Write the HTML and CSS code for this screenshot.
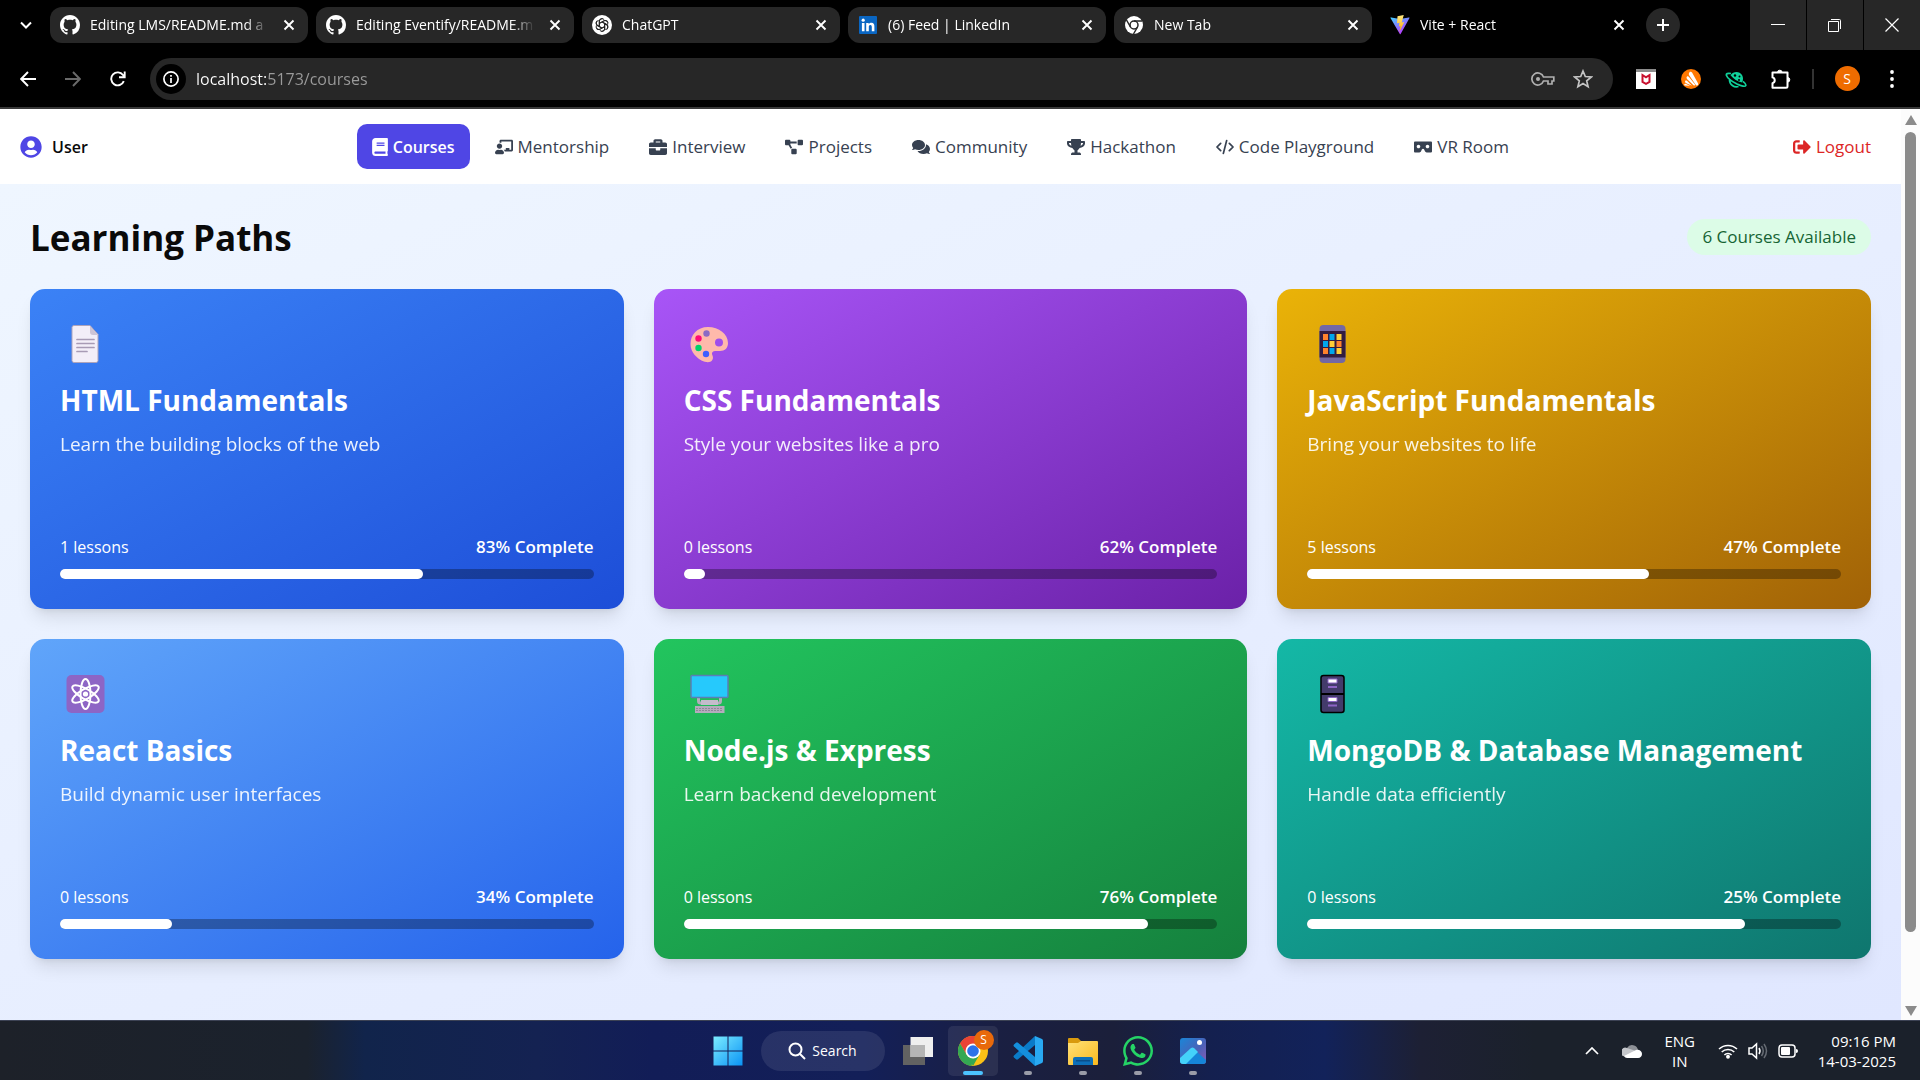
FILE: index.html
```html
<!DOCTYPE html>
<html lang="en">
<head>
<meta charset="utf-8">
<meta name="viewport" content="width=device-width, initial-scale=1">
<title>Vite + React</title>
<link rel="stylesheet" href="styles.css">
</head>
<body>
<svg class="defs" aria-hidden="true">
  <defs>
    <symbol id="x" viewBox="0 0 12 12"><path d="M1.500 1.500l9 9M10.500 1.500l-9 9" stroke="currentColor" stroke-width="1.900" fill="none"/></symbol>
    <symbol id="github" viewBox="0 0 16 16"><path fill="#fff" d="M8 0C3.580 0 0 3.580 0 8c0 3.540 2.290 6.530 5.470 7.590.4.070.55-.17.55-.38 0-.19-.01-.82-.01-1.490-2.010.37-2.530-.49-2.690-.94-.09-.23-.48-.94-.82-1.130-.28-.15-.68-.52-.01-.53.63-.01 1.080.58 1.230.82.72 1.210 1.870.87 2.330.66.07-.52.28-.87.51-1.070-1.780-.2-3.640-.89-3.640-3.950 0-.87.31-1.590.82-2.150-.08-.2-.36-1.020.08-2.120 0 0 .67-.21 2.200.82.64-.18 1.320-.27 2-.27s1.360.09 2 .27c1.530-1.040 2.200-.82 2.200-.82.44 1.100.16 1.920.08 2.120.51.56.82 1.270.82 2.150 0 3.070-1.870 3.750-3.650 3.950.29.25.54.73.54 1.480 0 1.070-.01 1.930-.01 2.200 0 .21.15.46.55.38A8.010 8.010 0 0 0 16 8c0-4.420-3.580-8-8-8z"/></symbol>
    <linearGradient id="vg" x1="0" y1="0" x2="0.600" y2="1"><stop offset="0" stop-color="#41d1ff"/><stop offset="1" stop-color="#bd34fe"/></linearGradient>
    <linearGradient id="vy" x1="0" y1="0" x2="0" y2="1"><stop offset="0" stop-color="#ffea83"/><stop offset="1" stop-color="#ffa800"/></linearGradient>
    <linearGradient id="win" x1="0" y1="0" x2="1" y2="1" gradientUnits="objectBoundingBox"><stop offset="0" stop-color="#7cecff"/><stop offset="1" stop-color="#0a93f5"/></linearGradient>
    <linearGradient id="fold" x1="0" y1="0" x2="1" y2="1"><stop offset="0" stop-color="#ffe178"/><stop offset="1" stop-color="#fbb91e"/></linearGradient>
    <linearGradient id="pho" x1="0" y1="0" x2="1" y2="1"><stop offset="0" stop-color="#1a86d8"/><stop offset="0.550" stop-color="#4a62b8"/><stop offset="1" stop-color="#8a5bb5"/></linearGradient>
  </defs>
</svg>

<header class="browser">
  <div class="tabstrip">
    <button class="tab-search" aria-label="Search tabs"><svg width="12" height="8" viewBox="0 0 12 8"><path d="M1 1.500l5 5 5-5" stroke="#fff" stroke-width="2" fill="none"/></svg></button>
    <div class="tabs">
      <div class="tab"><svg class="favicon" viewBox="0 0 16 16"><use href="#github"/></svg><button class="tab-title">Editing LMS/README.md a</button><button class="tab-close" aria-label="Close tab"><svg width="12" height="12"><use href="#x"/></svg></button></div>
      <div class="tab"><svg class="favicon" viewBox="0 0 16 16"><use href="#github"/></svg><button class="tab-title">Editing Eventify/README.m</button><button class="tab-close" aria-label="Close tab"><svg width="12" height="12"><use href="#x"/></svg></button></div>
      <div class="tab"><svg class="favicon" viewBox="0 0 20 20"><circle cx="10" cy="10" r="10" fill="#fff"/><g fill="none" stroke="#222" stroke-width="1"><path id="kn" d="M7.300 11.500V6.300a2.700 2.700 0 0 1 5-1.400M7.300 8.500l4.500-2.600a2.700 2.700 0 0 1 3.900 1.500"/><use href="#kn" transform="rotate(60 10 10)"/><use href="#kn" transform="rotate(120 10 10)"/><use href="#kn" transform="rotate(180 10 10)"/><use href="#kn" transform="rotate(240 10 10)"/><use href="#kn" transform="rotate(300 10 10)"/></g></svg><button class="tab-title">ChatGPT</button><button class="tab-close" aria-label="Close tab"><svg width="12" height="12"><use href="#x"/></svg></button></div>
      <div class="tab"><svg class="favicon" viewBox="0 0 20 20"><rect x="1" y="1" width="18" height="18" rx="1" fill="#0a66c2"/><circle cx="5.200" cy="5.200" r="1.600" fill="#fff"/><path fill="#fff" d="M3.900 8h2.600v8.300H3.900zM8.200 8h2.500v1.200c.5-.8 1.400-1.400 2.700-1.400 2.500 0 3 1.700 3 3.900v4.600h-2.600v-4.100c0-1.100-.1-2.200-1.500-2.200s-1.500 1.100-1.500 2.200v4.100H8.200z"/></svg><button class="tab-title">(6) Feed | LinkedIn</button><button class="tab-close" aria-label="Close tab"><svg width="12" height="12"><use href="#x"/></svg></button></div>
      <div class="tab"><svg class="favicon" viewBox="0 0 20 20"><circle cx="10" cy="10" r="9" fill="#fff"/><circle cx="10" cy="10" r="4" fill="#fff" stroke="#272727" stroke-width="1.500"/><path d="M10 6h8M6.500 12L2.500 5M13.500 12l-4 7" stroke="#272727" stroke-width="1.500"/></svg><button class="tab-title">New Tab</button><button class="tab-close" aria-label="Close tab"><svg width="12" height="12"><use href="#x"/></svg></button></div>
      <div class="tab tab-active"><svg class="favicon" viewBox="0 0 32 32"><path fill="url(#vg)" d="M31 5L17 30.500c-.3.500-1 .5-1.300 0L1 5c-.4-.6.200-1.300.9-1.200L16 6.500l14.200-2.700c.7-.1 1.100.6.8 1.200z"/><path fill="url(#vy)" d="M22 0L12 2l-.8 11.300 4-.9-1.200 6 2.800-.8-1.900 9.400 8-16-4.100.8z"/></svg><button class="tab-title">Vite + React</button><button class="tab-close" aria-label="Close tab"><svg width="12" height="12"><use href="#x"/></svg></button></div>
    </div>
    <button class="new-tab" aria-label="New tab"><svg width="14" height="14" viewBox="0 0 14 14"><path d="M7 1v12M1 7h12" stroke="#fff" stroke-width="2"/></svg></button>
    <div class="window-controls">
      <button aria-label="Minimize"><svg width="14" height="14" viewBox="0 0 14 14"><path d="M0 6.500h14" stroke="#fff"/></svg></button>
      <button aria-label="Restore"><svg width="14" height="14" viewBox="0 0 14 14"><path d="M.5 3.500h10v10H.5zM3 1.500h8.500q1 0 1 1V11" stroke="#fff" fill="none"/></svg></button>
      <button aria-label="Close"><svg width="14" height="14" viewBox="0 0 14 14"><path d="M.5.500l13 13M13.500.500l-13 13" stroke="#fff" stroke-width="1.200"/></svg></button>
    </div>
  </div>
  <div class="toolbar">
    <button class="tool" aria-label="Back"><svg width="16" height="16" viewBox="0 0 16 16"><path d="M16 8H1.500M8 1L1.200 8 8 15" stroke="#fff" stroke-width="1.900" fill="none"/></svg></button>
    <button class="tool" aria-label="Forward"><svg width="16" height="16" viewBox="0 0 16 16"><path d="M0 8h14.500M8 1l6.800 7L8 15" stroke="#6a6a6a" stroke-width="1.900" fill="none"/></svg></button>
    <button class="tool" aria-label="Reload"><svg width="16" height="16" viewBox="0 0 16 16"><path d="M13.800 10.200A6.500 6.500 0 1 1 13 4l1.300 1.700M14.700.500v5.700H9" stroke="#fff" stroke-width="1.900" fill="none"/></svg></button>
    <div class="address">
      <button class="site-info" aria-label="Site information"><svg width="16" height="16" viewBox="0 0 16 16"><circle cx="8" cy="8" r="7.100" stroke="#fff" stroke-width="1.700" fill="none"/><path d="M8 7v5M8 4v1.700" stroke="#fff" stroke-width="1.700"/></svg></button>
      <input class="url" type="text" aria-label="Address" value="localhost:5173/courses">
      <button class="tool" aria-label="Passwords"><svg width="24" height="14" viewBox="0 0 24 14"><path d="M12.500 5h10.300v4H21v3h-4V9h-4.500A6 6 0 1 1 12.500 5z" stroke="#b0b0b0" stroke-width="1.700" fill="none"/><circle cx="7" cy="7" r="2" fill="#b0b0b0"/></svg></button>
      <button class="tool" aria-label="Bookmark"><svg width="20" height="20" viewBox="0 0 20 20"><path d="M10 2l2.300 5.500 6 .5-4.600 3.900 1.400 5.800L10 14.600l-5.100 3.100 1.400-5.800L1.700 8l6-.5z" stroke="#c4c4c4" stroke-width="1.700" fill="none"/></svg></button>
    </div>
    <div class="extensions">
      <button class="tool" aria-label="McAfee"><svg width="20" height="20" viewBox="0 0 20 20"><path fill="#fff" d="M0 0h20v20H0z"/><path fill="#8c8c8c" d="M0 0h20v3H0z"/><path d="M6.500 6v7l3.500 1.800 3.500-1.800V6L10 8.300z" fill="none" stroke="#c8102e" stroke-width="2"/></svg></button>
      <button class="tool" aria-label="Avast"><svg width="20" height="20" viewBox="0 0 20 20"><circle cx="10" cy="10" r="10" fill="#ff7800"/><path fill="#fff" d="M8.500 3.200c-1 1.200-.8 2.400 0 3.600l6.500 9.500c1.700.7 2.800-.3 2-2L11.200 3.800c-.6-1-1.900-1.400-2.700-.6zM6 7.600c-.8 1-.5 1.700.2 2.700l6.300 6c1 .5 1.800 0 1.500-.8L8 8c-.6-.8-1.400-1-2-.4zM4.300 11.800c-.5.900-.2 1.600.5 2.100l6.200 2.900-5-5c-.6-.5-1.300-.6-1.700 0zM3.300 15.300c-.2.700.2 1.200.8 1.300l5 .2-4.600-2c-.6-.2-1-.1-1.200.5z"/></svg></button>
      <button class="tool" aria-label="Planet"><svg width="22" height="20" viewBox="0 0 22 20"><path d="M5.500 6.200C8.500 1.800 14.500 2 17 6c1.300 2 1.400 5 .2 7.500C12.500 12.500 8.500 10 5.500 6.200z" fill="#10d09a"/><path d="M6 4.500C2.500 4 .8 4.600 1.500 6.500c1 2.700 6 6.300 10.500 8.600 4.700 2.200 8.300 2.800 8.800 1.300.4-1-.8-2.400-2.800-4.100M4.500 11a7 7 0 0 0 9 6.500" fill="none" stroke="#10d09a" stroke-width="1.700"/><circle cx="10" cy="6.500" r="1.200" fill="#000"/><circle cx="14.500" cy="7.500" r="1" fill="#000"/><circle cx="14" cy="11" r="1" fill="#000"/></svg></button>
      <button class="tool" aria-label="Extensions"><svg width="22" height="22" viewBox="0 0 22 22"><path d="M2.500 4.500h15v13.800a1.500 1.500 0 0 1-1.500 1.500H2.500v-4.600a3 3 0 0 0 0-5.800z" stroke="#fff" stroke-width="2" fill="none" stroke-linejoin="round"/><path d="M7.500 4.500a2.300 2.300 0 0 1 4.600 0zM17.500 9.500a2.300 2.300 0 0 1 0 4.600z" fill="#fff" stroke="#fff"/></svg></button>
      <span class="divider"></span>
      <button class="tool" aria-label="Profile"><span class="avatar">S</span></button>
      <button class="tool" aria-label="Menu"><svg width="4" height="18" viewBox="0 0 4 18"><circle cx="2" cy="2" r="1.900" fill="#fff"/><circle cx="2" cy="9" r="1.900" fill="#fff"/><circle cx="2" cy="16" r="1.900" fill="#fff"/></svg></button>
    </div>
  </div>
</header>

<div class="viewport">
  <div class="page">
    <nav class="navbar">
      <a class="user" href="#"><svg width="22" height="22" viewBox="0 0 496 512" fill="#4f46e5"><path d="M248 8C111 8 0 119 0 256s111 248 248 248 248-111 248-248S385 8 248 8zm0 96c48.600 0 88 39.400 88 88s-39.400 88-88 88-88-39.400-88-88 39.400-88 88-88zm0 344c-58.700 0-111.300-26.600-146.500-68.200 18.800-35.400 55.600-59.800 98.500-59.800 2.400 0 4.800.4 7.100 1.100 13 4.200 26.600 6.900 40.900 6.900 14.300 0 28-2.700 40.900-6.900 2.300-.7 4.700-1.100 7.100-1.100 42.900 0 79.700 24.400 98.500 59.800C359.300 421.400 306.700 448 248 448z"/></svg>User</a>
      <div class="links">
        <a class="link link-active" href="#"><svg width="16" height="18" viewBox="0 0 448 512"><path d="M448 360V24c0-13.300-10.700-24-24-24H96C43 0 0 43 0 96v320c0 53 43 96 96 96h328c13.300 0 24-10.700 24-24v-16c0-7.500-3.500-14.300-8.900-18.700-4.200-15.400-4.200-59.300 0-74.700 5.400-4.300 8.900-11.100 8.900-18.600zM128 134c0-3.300 2.700-6 6-6h212c3.300 0 6 2.700 6 6v20c0 3.300-2.700 6-6 6H134c-3.300 0-6-2.700-6-6v-20zm0 64c0-3.300 2.700-6 6-6h212c3.300 0 6 2.700 6 6v20c0 3.300-2.700 6-6 6H134c-3.300 0-6-2.700-6-6v-20zm253.400 250H96c-17.700 0-32-14.300-32-32 0-17.600 14.400-32 32-32h285.400c-1.900 17.100-1.900 46.900 0 64z"/></svg>Courses</a>
        <a class="link" href="#"><svg width="18" height="18" viewBox="0 0 640 512"><path d="M208 352c-2.390 0-4.780.35-7.060 1.090C187.980 357.300 174.350 360 160 360c-14.350 0-27.980-2.700-40.950-6.910-2.280-.74-4.660-1.090-7.050-1.090C49.940 352-.33 402.480 0 464.620.14 490.880 21.730 512 48 512h224c26.270 0 47.860-21.120 48-47.380.33-62.140-49.940-112.620-112-112.620zm-48-32c53.020 0 96-42.980 96-96s-42.980-96-96-96-96 42.980-96 96 42.980 96 96 96zM592 0H208c-26.470 0-48 22.250-48 49.590V96c23.420 0 45.100 6.780 64 17.800V64h352v288h-64v-64H384v64h-76.240c19.100 16.690 33.120 38.730 39.690 64H592c26.470 0 48-22.250 48-49.590V49.590C640 22.250 618.470 0 592 0z"/></svg>Mentorship</a>
        <a class="link" href="#"><svg width="18" height="18" viewBox="0 0 512 512"><path d="M320 336c0 8.840-7.160 16-16 16h-96c-8.840 0-16-7.160-16-16v-48H0v144c0 25.600 22.400 48 48 48h416c25.600 0 48-22.400 48-48V288H320v48zm144-208h-80V80c0-25.600-22.400-48-48-48H176c-25.600 0-48 22.400-48 48v48H48c-25.600 0-48 22.400-48 48v80h512v-80c0-25.600-22.400-48-48-48zm-144 0H192V96h128v32z"/></svg>Interview</a>
        <a class="link" href="#"><svg width="18" height="18" viewBox="0 0 640 512"><path d="M384 320H256c-17.670 0-32 14.330-32 32v128c0 17.670 14.330 32 32 32h128c17.670 0 32-14.330 32-32V352c0-17.670-14.330-32-32-32zM192 32c0-17.670-14.330-32-32-32H32C14.330 0 0 14.330 0 32v128c0 17.670 14.330 32 32 32h95.720l73.160 128.040C211.980 300.980 232.400 288 256 288h.28L192 175.510V128h224V64H192V32zM608 0H480c-17.670 0-32 14.330-32 32v128c0 17.670 14.330 32 32 32h128c17.670 0 32-14.330 32-32V32c0-17.670-14.330-32-32-32z"/></svg>Projects</a>
        <a class="link" href="#"><svg width="18" height="18" viewBox="0 0 576 512"><path d="M416 192c0-88.400-93.100-160-208-160S0 103.600 0 192c0 34.300 14.100 65.900 38 92-13.400 30.200-35.500 54.200-35.800 54.500-2.200 2.300-2.800 5.700-1.500 8.700S4.800 352 8 352c36.600 0 66.900-12.300 88.700-25 32.200 15.700 70.300 25 111.300 25 114.900 0 208-71.600 208-160zm122 220c23.900-26 38-57.700 38-92 0-66.900-53.500-124.200-129.300-148.100.9 6.600 1.300 13.300 1.300 20.100 0 105.900-107.700 192-240 192-10.800 0-21.300-.8-31.700-1.900C207.800 439.600 281.800 480 368 480c41 0 79.100-9.200 111.300-25 21.800 12.700 52.100 25 88.700 25 3.200 0 6.100-1.900 7.300-4.800 1.300-2.900.7-6.300-1.500-8.700-.3-.3-22.400-24.200-35.800-54.500z"/></svg>Community</a>
        <a class="link" href="#"><svg width="18" height="18" viewBox="0 0 576 512"><path d="M552 64H448V24c0-13.300-10.700-24-24-24H152c-13.300 0-24 10.700-24 24v40H24C10.700 64 0 74.700 0 88v56c0 35.700 22.500 72.400 61.900 100.700 31.500 22.700 69.800 37.100 110 41.700C203.300 338.500 240 360 240 360v72h-48c-35.300 0-64 20.700-64 56v12c0 6.600 5.400 12 12 12h296c6.600 0 12-5.400 12-12v-12c0-35.300-28.700-56-64-56h-48v-72s36.700-21.500 68.100-73.600c40.300-4.600 78.600-19 110-41.700 39.300-28.300 61.900-65 61.900-100.700V88c0-13.300-10.700-24-24-24zM99.300 192.800C74.900 175.200 64 155.600 64 144v-16h64.200c1 32.600 5.800 61.200 12.800 86.200-15.100-5.200-29.200-12.400-41.700-21.400zM512 144c0 16.100-17.700 36.100-35.300 48.800-12.500 9-26.700 16.200-41.800 21.400 7-25 11.800-53.600 12.800-86.200H512v16z"/></svg>Hackathon</a>
        <a class="link" href="#"><svg width="18" height="18" viewBox="0 0 640 512"><path d="M165 125L35 256l130 131M475 125l130 131-130 131M378 30L262 482" fill="none" stroke="#374151" stroke-width="62" stroke-linecap="round" stroke-linejoin="round"/></svg>Code Playground</a>
        <a class="link" href="#"><svg width="18" height="18" viewBox="0 0 640 512"><path d="M608 64H32C14.330 64 0 78.330 0 96v320c0 17.670 14.330 32 32 32h160.220c25.190 0 48.030-14.770 58.360-37.740l27.740-61.640C286.210 331.080 302.350 320 320 320s33.790 11.080 41.680 28.620l27.740 61.640C399.750 433.230 422.600 448 447.780 448H608c17.670 0 32-14.330 32-32V96c0-17.670-14.330-32-32-32zM160 304c-35.350 0-64-28.650-64-64s28.650-64 64-64 64 28.650 64 64-28.650 64-64 64zm320 0c-35.350 0-64-28.650-64-64s28.650-64 64-64 64 28.650 64 64-28.650 64-64 64z"/></svg>VR Room</a>
      </div>
      <button class="logout"><svg width="18" height="18" viewBox="0 0 512 512"><path d="M497 273L329 441c-15 15-41 4.500-41-17v-96H152c-13.300 0-24-10.700-24-24v-96c0-13.300 10.700-24 24-24h136V88c0-21.400 25.900-32 41-17l168 168c9.300 9.400 9.300 24.600 0 34zM192 436v-40c0-6.600-5.400-12-12-12H96c-17.700 0-32-14.300-32-32V160c0-17.700 14.300-32 32-32h84c6.600 0 12-5.400 12-12V76c0-6.600-5.400-12-12-12H96c-53 0-96 43-96 96v192c0 53 43 96 96 96h84c6.600 0 12-5.400 12-12z"/></svg>Logout</button>
    </nav>
    <main class="main">
      <div class="heading">
        <h1>Learning Paths</h1>
        <span class="badge">6 Courses Available</span>
      </div>
      <div class="grid">
        <article class="card html">
          <svg class="emoji" viewBox="0 0 50 50"><path d="M14 6.500h16l8 9v26q0 2-2 2H14q-2 0-2-2v-33q0-2 2-2z" fill="#f3eef8" stroke="#aea4bb"/><path d="M30 7v6q0 3 3 3h5z" fill="#cdc4d6"/><path d="M17 20.500h17M17 24.500h17M17 28.500h17M17 32.500h10" stroke="#a89bb5" stroke-width="1.700" stroke-linecap="round"/></svg>
          <h2>HTML Fundamentals</h2>
          <p class="about">Learn the building blocks of the web</p>
          <div class="stats"><span>1 lessons</span><strong>83% Complete</strong></div>
          <div class="track"><div class="fill" style="width:68%"></div></div>
        </article>
        <article class="card css">
          <svg class="emoji" viewBox="0 0 50 50"><path fill="#ffb9ab" fill-rule="evenodd" d="M24 8C13 8 6.500 16 6.500 25c0 9 7 14 11 16.500 5 2.500 9 2 10.500 0 2.500-3.500-.5-5.500 0-7.500.7-2.500 4-2 8-2 5 0 8-3 8-8 0-9-9-16-20-16zm11 11.500a4 4 0 1 1 0 8 4 4 0 0 1 0-8z"/><circle cx="22.500" cy="14.500" r="3.200" fill="#8b6bc5"/><circle cx="14.500" cy="19.500" r="3.200" fill="#ff0a76"/><circle cx="14.500" cy="29" r="3.200" fill="#00d26a"/><circle cx="22" cy="35" r="3.200" fill="#3f5fff"/></svg>
          <h2>CSS Fundamentals</h2>
          <p class="about">Style your websites like a pro</p>
          <div class="stats"><span>0 lessons</span><strong>62% Complete</strong></div>
          <div class="track"><div class="fill" style="width:4%"></div></div>
        </article>
        <article class="card js">
          <svg class="emoji" viewBox="0 0 50 50"><rect x="12.500" y="6" width="26" height="38" rx="4" fill="#7368a5"/><path fill="#331c40" d="M12.500 12h26v26.500h-26z"/><g><path fill="#ff822d" d="M16 15h5v6h-5zM16 29h5v6h-5z"/><path fill="#00a6ed" d="M22.500 15h5v6h-5zM16 22h5v6h-5zM22.500 29h5v6h-5z"/><path fill="#ffce38" d="M29.500 15h5v6h-5zM22.500 22h5v6h-5zM29.500 29h5v6h-5z"/><path fill="#ff822d" d="M29.500 22h5v6h-5z"/></g></svg>
          <h2>JavaScript Fundamentals</h2>
          <p class="about">Bring your websites to life</p>
          <div class="stats"><span>5 lessons</span><strong>47% Complete</strong></div>
          <div class="track"><div class="fill" style="width:64%"></div></div>
        </article>
        <article class="card react">
          <svg class="emoji" viewBox="0 0 50 50"><rect x="6.500" y="6" width="38" height="38" rx="5" fill="#8d65c5"/><g fill="none" stroke="#fff" stroke-width="2"><ellipse cx="25.500" cy="25" rx="5" ry="15"/><ellipse cx="25.500" cy="25" rx="5" ry="15" transform="rotate(60 25.500 25)"/><ellipse cx="25.500" cy="25" rx="5" ry="15" transform="rotate(120 25.500 25)"/></g><circle cx="25.500" cy="25" r="2.600" fill="#fff"/></svg>
          <h2>React Basics</h2>
          <p class="about">Build dynamic user interfaces</p>
          <div class="stats"><span>0 lessons</span><strong>34% Complete</strong></div>
          <div class="track"><div class="fill" style="width:21%"></div></div>
        </article>
        <article class="card node">
          <svg class="emoji" viewBox="0 0 50 50"><path d="M14.500 28v4q0 2 2 2h18q2 0 2-2v-4" fill="none" stroke="#b4acbc" stroke-width="3"/><path fill="#c4bccb" d="M17 31h17v5H17z"/><rect x="7" y="6.500" width="37" height="22" rx="1" fill="#26c9fc" stroke="#5a7fb5" stroke-width="1.500"/><path fill="#b4acbc" d="M11 37h29.500v7H11z"/><path d="M12 39.500h27M12 41.500h27" stroke="#8f8799" stroke-dasharray="2 1"/></svg>
          <h2>Node.js &amp; Express</h2>
          <p class="about">Learn backend development</p>
          <div class="stats"><span>0 lessons</span><strong>76% Complete</strong></div>
          <div class="track"><div class="fill" style="width:87%"></div></div>
        </article>
        <article class="card mongo">
          <svg class="emoji" viewBox="0 0 50 50"><rect x="14" y="6.500" width="23" height="37" rx="2.500" fill="#433b6b" stroke="#000" stroke-width="1.500"/><path d="M14 25h23" stroke="#000" stroke-width="2"/><path fill="#fff" stroke="#8d65c5" d="M21 10h9v4h-9zM21 28.500h9v4h-9z"/><path d="M21 18h9M21 36.500h9" stroke="#8d65c5" stroke-width="2"/></svg>
          <h2>MongoDB &amp; Database Management</h2>
          <p class="about">Handle data efficiently</p>
          <div class="stats"><span>0 lessons</span><strong>25% Complete</strong></div>
          <div class="track"><div class="fill" style="width:82%"></div></div>
        </article>
      </div>
    </main>
  </div>
  <div class="scrollbar" aria-hidden="true">
    <span class="arrow arrow-up"></span>
    <span class="thumb"></span>
    <span class="arrow arrow-down"></span>
  </div>
</div>

<footer class="taskbar">
  <div class="apps">
    <button class="app" aria-label="Start"><svg width="30" height="30" viewBox="0 0 30 30"><path fill="url(#win)" d="M.5.500h14v14H.5zM15.500.500h14v14h-14zM.5 15.500h14v14H.5zM15.500 15.500h14v14h-14z"/></svg></button>
    <button class="search"><svg width="18" height="18" viewBox="0 0 18 18"><circle cx="7.500" cy="7.500" r="6" stroke="#fff" stroke-width="2" fill="none"/><path d="M12 12l5 5" stroke="#fff" stroke-width="2"/></svg>Search</button>
    <button class="app" aria-label="Task view"><svg width="30" height="28" viewBox="0 0 30 28"><path fill="#626262" d="M0 8h22v20H0z"/><path fill="#efefef" d="M7.500 0H30v20H7.500z"/><path fill="#b5b5b5" d="M7.500 8H22v12H7.500z"/></svg></button>
    <button class="app app-active" aria-label="Chrome"><svg width="30" height="30" viewBox="0 0 30 30"><circle cx="15" cy="15" r="15" fill="#fbc116"/><path fill="#ea4335" d="M2 7.500A15 15 0 0 1 28 7.500L15 8.500 8.500 18.700z"/><path fill="#34a853" d="M2 7.500l6.500 11 6.500 4L13.500 30A15 15 0 0 1 2 7.500z"/><path fill="#34a853" d="M8.500 18.700L15 22.500l6.500-3.700L15 30z"/><circle cx="15" cy="15" r="7.500" fill="#fff"/><circle cx="15" cy="15" r="5.800" fill="#2d72ea"/></svg><span class="app-badge">S</span></button>
    <button class="app app-open" aria-label="Visual Studio Code"><svg width="30" height="30" viewBox="0 0 30 30"><path fill="#0a7bc8" d="M22 0L1 19.500q-1 1 0 2l2 1.800q1 .8 2 0L22 9z"/><path fill="#148fdc" d="M22 30L1 10.500q-1-1 0-2l2-1.800q1-.8 2 0L22 21z"/><path fill="#29a9f2" d="M22 0l7 3q1 .5 1 2v20q0 1.500-1 2l-7 3z"/></svg></button>
    <button class="app app-open" aria-label="File Explorer"><svg width="30" height="28" viewBox="0 0 30 28"><path fill="#d99a0e" d="M0 2q0-1 1-1h9l3 3v4H0z"/><path fill="url(#fold)" d="M0 6h10l3-2h16q1 0 1 1v22q0 1-1 1H1q-1 0-1-1z"/><path fill="#0d6fb8" d="M5 28v-6q0-2 2-2h16q2 0 2 2v6z"/><path fill="#0a4f8a" d="M8 23h14v1.500H8z"/></svg></button>
    <button class="app app-open" aria-label="WhatsApp"><svg width="30" height="30" viewBox="0 32 448 448"><path fill="#25d366" d="M380.900 97.100C339 55.100 283.200 32 223.900 32c-122.400 0-222 99.600-222 222 0 39.100 10.200 77.300 29.600 111L0 480l117.700-30.900c32.400 17.700 68.900 27 106.100 27h.1c122.300 0 224.100-99.600 224.100-222 0-59.300-25.200-115-67.100-157zm-157 341.600c-33.200 0-65.700-8.900-94-25.700l-6.700-4-69.800 18.300L72 359.200l-4.400-7c-18.500-29.400-28.200-63.300-28.200-98.200 0-101.700 82.800-184.500 184.600-184.500 49.300 0 95.600 19.200 130.400 54.100 34.800 34.900 56.200 81.200 56.100 130.500 0 101.800-84.900 184.600-186.600 184.600zm101.200-138.200c-5.500-2.800-32.800-16.200-37.900-18-5.100-1.900-8.800-2.800-12.500 2.800-3.700 5.600-14.300 18-17.600 21.800-3.200 3.700-6.500 4.200-12 1.400-32.600-16.300-54-29.100-75.500-66-5.700-9.800 5.700-9.100 16.300-30.300 1.800-3.700.9-6.900-.5-9.700-1.400-2.800-12.500-30.100-17.100-41.200-4.500-10.800-9.100-9.300-12.500-9.500-3.200-.2-6.900-.2-10.600-.2-3.700 0-9.700 1.400-14.800 6.900-5.100 5.600-19.400 19-19.400 46.300 0 27.300 19.900 53.700 22.600 57.400 2.800 3.700 39.100 59.700 94.800 83.800 35.200 15.200 49 16.500 66.600 13.900 10.700-1.600 32.800-13.400 37.400-26.400 4.600-13 4.600-24.100 3.200-26.400-1.300-2.500-5-3.900-10.500-6.600z"/></svg></button>
    <button class="app app-open" aria-label="Photos"><svg width="26" height="26" viewBox="0 0 26 26"><rect width="26" height="26" rx="3" fill="url(#pho)"/><path fill="#1685d8" d="M5 26L17 14l9 8v1q0 3-3 3z"/><path fill="#44d2fa" d="M0 20L11 10q1.500-1.200 3 0l4 4L6 26H3q-3 0-3-3z"/><circle cx="19.500" cy="4.500" r="2.500" fill="#fff"/></svg></button>
  </div>
  <div class="tray">
    <button class="tray-icon" aria-label="Show hidden icons"><svg width="14" height="8" viewBox="0 0 14 8"><path d="M1 7l6-6 6 6" stroke="#fff" stroke-width="1.700" fill="none"/></svg></button>
    <button class="tray-icon" aria-label="OneDrive"><svg width="20" height="14" viewBox="0 0 20 14"><path fill="#8d9096" d="M5 4a6 6 0 0 1 11 2l-9 4z"/><path fill="#c5c7cb" d="M1 12a4.500 4.500 0 0 1 4-8l9 3-9 6z"/><path fill="#fff" d="M2 12l12-6c3-1 6 1 6 4 0 2-1.500 4-4 4H5q-2 0-3-2z"/></svg></button>
    <button class="language">ENG<br>IN</button>
    <div class="status">
      <svg width="20" height="16" viewBox="0 0 20 16" fill="none" stroke="#fff" stroke-width="1.500"><path d="M1 6a13 13 0 0 1 18 0M3.700 9a9 9 0 0 1 12.600 0M6.400 12a5 5 0 0 1 7.200 0"/><circle cx="10" cy="13.700" r="1.200" fill="#fff"/></svg>
      <svg width="20" height="18" viewBox="0 0 20 18" fill="none" stroke="#fff" stroke-width="1.500"><path d="M1 6h3l4.500-4v14L4 12H1zM11 6q2 3 0 6"/><path d="M13.500 4q3.500 5 0 10M16 2q5 7 0 14" stroke="#666b73"/></svg>
      <svg width="20" height="14" viewBox="0 0 20 14"><rect x="1" y="1" width="16" height="12" rx="3" fill="none" stroke="#fff" stroke-width="1.500"/><rect x="3" y="3" width="9" height="8" rx="1" fill="#fff"/><path d="M18 5q2 0 2 2t-2 2z" fill="#fff"/></svg>
    </div>
    <button class="clock">09:16 PM<br>14-03-2025</button>
  </div>
</footer>
</body>
</html>
```
FILE: styles.css
```css
* { box-sizing: border-box; }

body {
  margin: 0;
  min-height: 100vh;
  display: flex;
  flex-direction: column;
  font-family: "Open Sans", "Noto Sans", sans-serif;
  font-size: 16px;
  line-height: 24px;
  color: #0a0a0a;
}

button, input { font: inherit; color: inherit; border: 0; padding: 0; background: none; }
a { color: inherit; text-decoration: none; }
h1, h2, p { margin: 0; }
svg { flex: none; display: block; }
.defs { position: absolute; width: 0; height: 0; }

/* Browser chrome */
.browser { background: #000; color: #fff; border-bottom: 2px solid #383838; }
.tabstrip { display: flex; align-items: center; height: 50px; }
.tab-search { display: flex; justify-content: center; width: 32px; margin: 0 8px 0 10px; }
.tabs { display: flex; gap: 8px; min-width: 0; }
.tab {
  display: flex;
  align-items: center;
  gap: 10px;
  flex: 0 1 258px;
  width: 258px;
  min-width: 0;
  height: 36px;
  padding: 0 13px 0 10px;
  border-radius: 12px;
  background: #272727;
  font-size: 14px;
}
.tab-active { background: none; }
.favicon { width: 20px; height: 20px; }
.tab-title {
  flex: 1;
  min-width: 0;
  overflow: hidden;
  white-space: nowrap;
  text-align: left;
  -webkit-mask-image: linear-gradient(to left, transparent 4px, #000 28px);
  mask-image: linear-gradient(to left, transparent 4px, #000 28px);
}
.new-tab {
  display: flex;
  align-items: center;
  justify-content: center;
  width: 34px;
  height: 34px;
  margin-left: 8px;
  border-radius: 50%;
  background: #272727;
}
.window-controls { display: flex; gap: 1px; align-self: stretch; margin-left: auto; }
.window-controls button { display: flex; align-items: center; justify-content: center; width: 56px; background: #272727; }

.toolbar { display: flex; align-items: center; gap: 9px; height: 57px; padding: 0 10px; }
.tool { display: flex; align-items: center; justify-content: center; width: 36px; height: 36px; }
.address {
  flex: 1;
  display: flex;
  align-items: center;
  gap: 4px;
  height: 42px;
  margin: 0 6px 0 5px;
  padding: 0 12px 0 6px;
  border-radius: 21px;
  background: #272727;
}
.site-info { display: flex; align-items: center; justify-content: center; width: 30px; height: 30px; border-radius: 50%; background: #000; }
.url {
  flex: 1;
  min-width: 0;
  margin-left: 6px;
  color: transparent;
  background: linear-gradient(90deg, #fff 72px, #9b9b9b 72px);
  -webkit-background-clip: text;
  background-clip: text;
}
.extensions { display: flex; align-items: center; gap: 9px; }
.divider { width: 2px; height: 20px; margin: 0 6px 0 4px; background: #333; }
.avatar { width: 25px; border-radius: 50%; background: #ef6c00; font-size: 14px; line-height: 25px; text-align: center; }

/* Page */
.viewport { flex: 1; display: flex; }
.page { flex: 1; min-width: 0; display: flex; flex-direction: column; }
.navbar {
  display: flex;
  align-items: center;
  justify-content: space-between;
  height: 75px;
  padding: 0 30px 0 20px;
  background: #fff;
  font-size: 17px;
  font-weight: 500;
}
.user { display: flex; align-items: center; gap: 10px; font-size: 16px; font-weight: 600; }
.links { display: flex; gap: 10px; }
.link {
  display: flex;
  align-items: center;
  gap: 5px;
  height: 45px;
  padding: 0 15px;
  border-radius: 10px;
  color: #374151;
  fill: currentColor;
}
.link-active { background: #4f46e5; color: #fff; font-size: 16px; font-weight: 600; }
.logout { display: flex; align-items: center; gap: 5px; color: #dc2626; fill: currentColor; font-weight: 400; }

.main { flex: 1; padding: 30px 30px 60px; background: linear-gradient(to bottom right, #eff6ff, #e0e7ff); }
.heading { display: flex; align-items: center; justify-content: space-between; margin-bottom: 30px; }
.heading h1 { padding-top: 3px; font-size: 35px; line-height: 42px; }
.badge { padding: 6px 15px; border-radius: 18px; background: #dcfce7; color: #166534; font-size: 17px; font-weight: 500; }

.grid { display: grid; grid-template-columns: repeat(3, minmax(0, 1fr)); gap: 30px; }
.card {
  display: flex;
  flex-direction: column;
  min-height: 320px;
  padding: 30px;
  border-radius: 15px;
  color: #fff;
  box-shadow: 0 12px 18px -4px rgba(0, 0, 0, 0.1), 0 5px 8px -5px rgba(0, 0, 0, 0.1);
}
.html { background: linear-gradient(to bottom right, #3b82f6, #1d4ed8); }
.css { background: linear-gradient(to bottom right, #a855f7, #6b21a8); }
.js { background: linear-gradient(to bottom right, #eab308, #a16207); }
.react { background: linear-gradient(to bottom right, #60a5fa, #2563eb); }
.node { background: linear-gradient(to bottom right, #22c55e, #15803d); }
.mongo { background: linear-gradient(to bottom right, #14b8a6, #0f766e); }
.emoji { width: 50px; height: 50px; margin-bottom: 10px; }
.card h2 { font-size: 28px; line-height: 42px; margin-bottom: 8px; }
.about { font-size: 19px; line-height: 30px; opacity: 0.9; }
.stats { display: flex; align-items: baseline; justify-content: space-between; margin: auto 0 10px; }
.stats strong { font-size: 17px; font-weight: 600; }
.track { height: 10px; border-radius: 5px; background: rgba(0, 0, 0, 0.3); }
.fill { height: 10px; border-radius: 5px; background: #fff; }

.scrollbar { display: flex; flex-direction: column; align-items: center; width: 19px; padding: 6px 0 4px; background: #fcfcfc; }
.arrow { border: 6px solid transparent; }
.arrow-up { border-top: 0; border-bottom: 10px solid #8b8b8b; }
.arrow-down { border-bottom: 0; border-top: 10px solid #8b8b8b; }
.thumb { flex: 0 1 800px; width: 11px; margin: 7px 0 auto; border-radius: 6px; background: #8b8b8b; }

/* Taskbar */
.taskbar {
  display: grid;
  grid-template-columns: 1fr auto 1fr;
  align-items: center;
  height: 60px;
  border-top: 1px solid #3c4254;
  background: linear-gradient(90deg, #1d2129 0%, #1b222d 16%, #11244b 19%, #142252 28%, #121d57 34%, #131f58 45%, #1a1f42 52%, #1b1f3a 58%, #14204f 63%, #12225a 69%, #1d2034 74%, #1b212b 80%);
  color: #fff;
  font-size: 14px;
  line-height: 20px;
}
.apps { grid-column: 2; display: flex; align-items: center; gap: 5px; }
.app { position: relative; display: flex; align-items: center; justify-content: center; width: 50px; height: 50px; border-radius: 5px; }
.app-active { background: rgba(255, 255, 255, 0.08); }
.app-active::after, .app-open::after {
  content: "";
  position: absolute;
  bottom: 1px;
  left: 50%;
  width: 8px;
  height: 4px;
  margin-left: -4px;
  border-radius: 2px;
  background: #9a9ca8;
}
.app-active::after { width: 20px; margin-left: -10px; background: #4cc2ff; }
.app-badge { position: absolute; top: 4px; right: 4px; width: 20px; border-radius: 50%; background: #e8690b; font-size: 12px; line-height: 20px; text-align: center; }
.search {
  display: flex;
  align-items: center;
  justify-content: center;
  gap: 6px;
  width: 124px;
  height: 40px;
  margin: 0 3px;
  border-radius: 20px;
  background: rgba(255, 255, 255, 0.09);
}
.tray { grid-column: 3; display: flex; align-items: center; justify-content: flex-end; padding-right: 24px; font-size: 15px; }
.tray-icon { display: flex; justify-content: center; width: 40px; }
.language { width: 56px; text-align: center; }
.status { display: flex; align-items: center; gap: 10px; margin: 0 20px 0 10px; }
.clock { text-align: right; }
```
